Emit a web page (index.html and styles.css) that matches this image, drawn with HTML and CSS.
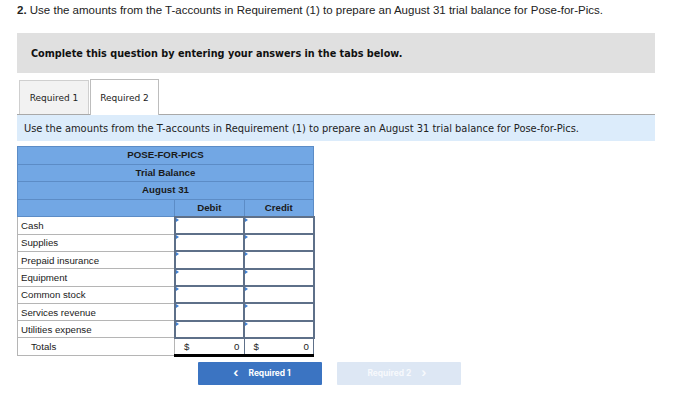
FILE: index.html
```html
<!DOCTYPE html>
<html>
<head>
<meta charset="utf-8">
<link rel="stylesheet" href="styles.css">
</head>
<body>
<p class="q-title"><b>2.</b> Use the amounts from the T-accounts in Requirement (1) to prepare an August 31 trial balance for Pose-for-Pics.</p>
<div class="panel">
  <div class="notice">Complete this question by entering your answers in the tabs below.</div>
  <div class="tabs">
    <div class="tab">Required 1</div>
    <div class="tab active">Required 2</div>
  </div>
  <div class="instr">Use the amounts from the T-accounts in Requirement (1) to prepare an August 31 trial balance for Pose-for-Pics.</div>
</div>
<table class="tb">
  <colgroup><col class="c-label"><col class="c-num"><col class="c-num"></colgroup>
  <tr class="hd"><th colspan="3">POSE-FOR-PICS</th></tr>
  <tr class="hd"><th colspan="3">Trial Balance</th></tr>
  <tr class="hd"><th colspan="3">August 31</th></tr>
  <tr class="hd"><th></th><th>Debit</th><th>Credit</th></tr>
  <tr><td class="lbl">Cash</td><td class="inp"><span class="mk"></span></td><td class="inp"><span class="mk"></span></td></tr>
  <tr><td class="lbl">Supplies</td><td class="inp"><span class="mk"></span></td><td class="inp"><span class="mk"></span></td></tr>
  <tr><td class="lbl">Prepaid insurance</td><td class="inp"><span class="mk"></span></td><td class="inp"><span class="mk"></span></td></tr>
  <tr><td class="lbl">Equipment</td><td class="inp"><span class="mk"></span></td><td class="inp"><span class="mk"></span></td></tr>
  <tr><td class="lbl">Common stock</td><td class="inp"><span class="mk"></span></td><td class="inp"><span class="mk"></span></td></tr>
  <tr><td class="lbl">Services revenue</td><td class="inp"><span class="mk"></span></td><td class="inp"><span class="mk"></span></td></tr>
  <tr><td class="lbl">Utilities expense</td><td class="inp"><span class="mk"></span></td><td class="inp"><span class="mk"></span></td></tr>
  <tr class="tot"><td class="lbl ind">Totals</td><td class="sum"><span>$</span><span>0</span></td><td class="sum"><span>$</span><span>0</span></td></tr>
</table>
<div class="nav">
  <button class="btn prev"><span class="chev">&lsaquo;</span> Required 1</button>
  <button class="btn next">Required 2 <span class="chev">&rsaquo;</span></button>
</div>
</body>
</html>
```
FILE: styles.css
```css
html, body { margin: 0; padding: 0; background: #fff; }
body { font-family: "Liberation Sans", Arial, sans-serif; color: #222; width: 700px; height: 407px; overflow: hidden; }

.q-title { margin: 3px 0 0 17px; font-size: 11.5px; line-height: 14px; color: #222; }
.q-title b { font-weight: bold; }

.panel { margin: 16px 0 0 17px; width: 638px; font-family: "DejaVu Sans", Verdana, sans-serif; }
.notice { height: 40px; background: #e0e0e0; display: flex; align-items: center; padding-left: 14px; font-weight: bold; font-size: 9.7px; color: #111; box-sizing: border-box; }
.tabs { margin-top: 6px; height: 35px; display: flex; align-items: flex-end; gap: 1px; border-bottom: 1px solid #a9a9a9; padding-left: 2px; }
.tab { height: 34px; width: 70px; box-sizing: border-box; display: flex; align-items: center; justify-content: center; font-size: 9px; color: #222; background: #f2f2f2; border: 1px solid #cfcfcf; border-bottom: none; }
.tab.active { height: 36px; background: #fff; border-color: #bdbdbd; margin-bottom: -1px; width: 69px; }
.instr { height: 26px; background: #dcecfb; display: flex; align-items: center; padding-left: 7px; font-size: 9.9px; color: #222; }

.tb { margin: 5px 0 0 17px; border-collapse: collapse; width: 296px; font-family: "Liberation Sans", Arial, sans-serif; font-size: 9.7px; table-layout: fixed; }
.tb col.c-label { width: 157px; }
.tb col.c-num { width: 69.5px; }
.tb tr { height: 17.3px; }
.tb tr.hd { height: 17.6px; }
.tb th { background: #72a7e4; color: #1a1a1a; font-weight: bold; padding: 0; border: 1px solid #5c8cc6; text-align: center; line-height: 14px; }
.tb td { padding: 0; line-height: 13px; }
.tb .lbl { border: 1px solid #b5b5b5; padding-left: 3px; color: #1a1a1a; }
.tb .ind { padding-left: 13px; }
.tb .inp { border: 2px solid #5e7089; position: relative; background: #fff; }
.mk { position: absolute; top: 0; left: 0; width: 0; height: 0; border-top: 2px solid transparent; border-bottom: 2px solid transparent; border-left: 3px solid #3f7fd0; }
.tb .sum { border-left: 1px solid #5e7089; border-right: 1px solid #5e7089; border-bottom: 3px solid #000; padding: 0 4px 0 9px; }
.tb .sum span:first-child { float: left; }
.tb .sum span:last-child { float: right; }

.nav { margin: 5px 0 0 198px; display: flex; gap: 15px; }
.btn { width: 124px; height: 23px; border: none; border-radius: 1px; font-family: Inter, "DejaVu Sans", sans-serif; font-weight: bold; font-size: 8.4px; color: #fff; display: flex; align-items: center; justify-content: center; gap: 6px; padding: 0; }
.btn.prev { background: #3b74c2; }
.btn.next { background: #dde7f4; color: #f7f9fc; }
.chev { font-size: 12px; line-height: 10px; font-weight: bold; margin: 0 4px; }
```
